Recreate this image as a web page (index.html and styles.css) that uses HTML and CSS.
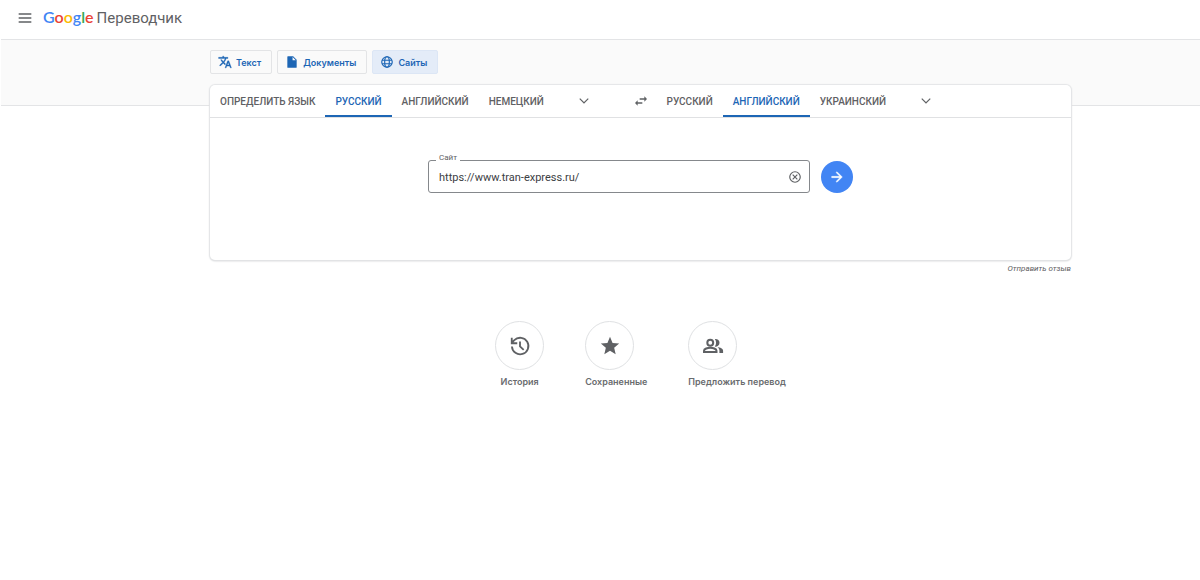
FILE: index.html
```html
<!DOCTYPE html>
<html lang="ru">
<head>
<meta charset="utf-8">
<meta name="viewport" content="width=device-width, initial-scale=1">
<title>Google Переводчик</title>
<link rel="stylesheet" href="styles.css">
</head>
<body>
<header class="header">
  <button class="icon-button" type="button" aria-label="Главное меню">
    <svg width="16" height="16" viewBox="0 0 24 24"><path d="M2.500 19h19v-2.200h-19zM2.500 13.100h19v-2.200h-19zM2.500 5v2.200h19V5z"/></svg>
  </button>
  <a class="brand" href="#">
    <span class="logo"><span class="blue">G</span><span class="red">o</span><span class="yellow">o</span><span class="blue">g</span><span class="green">l</span><span class="red">e</span></span>
    <span class="product">Переводчик</span>
  </a>
</header>
<main class="main">
  <div class="band">
    <nav class="modes">
      <button class="mode" type="button">
        <svg width="14" height="14" viewBox="0 0 24 24"><path stroke="currentColor" stroke-width=".6" d="M12.870 15.070l-2.540-2.510.03-.03A17.520 17.520 0 0 0 14.070 6H17V4h-7V2H8v2H1v1.990h11.170C11.500 7.920 10.440 9.750 9 11.350 8.070 10.320 7.300 9.190 6.690 8h-2c.73 1.630 1.730 3.170 2.980 4.560l-5.090 5.020L4 19l5-5 3.110 3.110.76-2.040zM18.500 10h-2L12 22h2l1.120-3h4.750L21 22h2l-4.500-12zm-2.620 7l1.620-4.330L19.120 17h-3.240z"/></svg>
        Текст
      </button>
      <button class="mode" type="button">
        <svg width="14" height="14" viewBox="0 0 24 24"><path d="M5 2h9l6 6v13a1 1 0 0 1-1 1H5a1 1 0 0 1-1-1V3a1 1 0 0 1 1-1zm8 1.500V9h5.500z"/></svg>
        Документы
      </button>
      <button class="mode mode-active" type="button">
        <svg width="14" height="14" viewBox="0 0 24 24" class="line-icon"><circle cx="12" cy="12" r="9"/><ellipse cx="12" cy="12" rx="4" ry="9"/><path d="M3.500 9h17M3.500 15h17"/></svg>
        Сайты
      </button>
    </nav>
  </div>
  <div class="column">
    <section class="card">
      <div class="languages">
        <div class="tabs tabs-source">
          <button class="tab" type="button">Определить язык</button>
          <button class="tab tab-active" type="button">Русский</button>
          <button class="tab" type="button">Английский</button>
          <button class="tab" type="button">Немецкий</button>
          <button class="more" type="button" aria-label="Другие языки"><svg width="14" height="14" viewBox="0 0 24 24"><path d="M5.410 7.090L4 8.500l8 8 8-8-1.410-1.410L12 13.670z"/></svg></button>
        </div>
        <button class="swap" type="button" aria-label="Поменять языки"><svg width="16" height="16" viewBox="0 0 24 24"><path d="M6.990 11L3 15l3.990 4v-3H14v-2H6.990v-3zM21 9l-3.990-4v3H10v2h7.010v3L21 9z"/></svg></button>
        <div class="tabs tabs-target">
          <button class="tab" type="button">Русский</button>
          <button class="tab tab-active" type="button">Английский</button>
          <button class="tab" type="button">Украинский</button>
          <button class="more" type="button" aria-label="Другие языки"><svg width="14" height="14" viewBox="0 0 24 24"><path d="M5.410 7.090L4 8.500l8 8 8-8-1.410-1.410L12 13.670z"/></svg></button>
        </div>
      </div>
      <form class="site-form">
        <div class="field">
          <label class="field-label" for="site">Сайт</label>
          <input class="field-input" id="site" type="text" value="https://www.tran-express.ru/">
          <button class="clear" type="button" aria-label="Очистить"><svg width="14" height="14" viewBox="0 0 24 24" class="line-icon"><circle cx="12" cy="12" r="9"/><path d="M8 8l8 8M16 8l-8 8"/></svg></button>
        </div>
        <button class="go" type="submit" aria-label="Перевести"><svg width="16" height="16" viewBox="0 0 24 24"><path stroke="currentColor" stroke-width=".6" d="M12 4l-1.410 1.410L16.170 11H4v2h12.170l-5.580 5.590L12 20l8-8z"/></svg></button>
      </form>
    </section>
    <a class="feedback" href="#">Отправить отзыв</a>
    <nav class="actions">
      <a class="action" href="#">
        <span class="action-circle"><svg width="22" height="22" viewBox="0 0 24 24" class="line-icon"><path d="M3.200 12.500a9 9 0 1 0 2.600-6.800L3 8.500M3 3v6h6M12 7v5.400l4 3.800"/></svg></span>
        <span class="action-label">История</span>
      </a>
      <a class="action" href="#">
        <span class="action-circle"><svg width="22" height="22" viewBox="0 0 24 24"><path d="M12 17.270L18.180 21l-1.640-7.030L22 9.240l-7.190-.61L12 2 9.190 8.630 2 9.240l5.460 4.730L5.820 21z"/></svg></span>
        <span class="action-label">Сохраненные</span>
      </a>
      <a class="action" href="#">
        <span class="action-circle"><svg width="22" height="22" viewBox="0 0 24 24"><g fill="none" stroke="currentColor" stroke-width="2.200"><circle cx="9" cy="8.500" r="3.200"/><path d="M2.200 18.600v-1.500c0-2 4-3.300 6.800-3.300s6.800 1.300 6.800 3.300v1.500z"/></g><path d="M14 4.400a4.200 4.200 0 1 1 0 8.200c1.800-2.500 1.800-5.700 0-8.200zM17 13.200c2.800.5 6 1.800 6 4v2.500h-4v-2.500c0-1.600-.8-3-2-4z"/></svg></span>
        <span class="action-label">Предложить перевод</span>
      </a>
    </nav>
  </div>
</main>
</body>
</html>
```
FILE: styles.css
```css
* {
  box-sizing: border-box;
}

body {
  margin: 0;
  background: #fff;
  color: #5f6164;
  font-family: Roboto, "Liberation Sans", sans-serif;
}

button {
  margin: 0;
  padding: 0;
  border: 0;
  background: none;
  color: inherit;
  font-family: inherit;
  cursor: pointer;
}

a {
  color: inherit;
  text-decoration: none;
}

svg {
  display: block;
  flex: none;
  fill: currentColor;
}

.line-icon {
  fill: none;
  stroke: currentColor;
  stroke-width: 2;
}

.header {
  display: flex;
  align-items: center;
  gap: 10px;
  height: 39px;
  padding: 0 17px 4px;
}

.brand {
  display: flex;
  align-items: baseline;
  gap: 3px;
}

.logo {
  font-family: Lato, sans-serif;
  font-size: 16px;
  font-weight: 600;
  line-height: 20px;
}

.product {
  font-size: 15px;
  line-height: 20px;
}

.blue { color: #4285f4; }
.red { color: #ea4335; }
.yellow { color: #fbbc05; }
.green { color: #34a853; }

.band {
  height: 67px;
  margin-left: 1px;
  padding: 10px 129px 0 209px;
  border: 1px solid #e3e4e6;
  border-width: 1px 0;
  background: #fafafa;
}

.modes {
  display: flex;
  gap: 5px;
}

.mode {
  display: flex;
  align-items: center;
  gap: 4px;
  height: 24px;
  padding: 0 10px 0 7px;
  border: 1px solid #e3e4e6;
  border-radius: 2px;
  color: #1d66b5;
  font-family: Inter, sans-serif;
  font-size: 9px;
  font-weight: 600;
}

.mode-active {
  border-color: #dce6f5;
  background: #e4ecf8;
}

.column {
  display: flex;
  flex-direction: column;
  margin-top: -21px;
  padding: 0 129px 0 210px;
}

.card {
  min-height: 175px;
  border-radius: 5px;
  background: #fff;
  box-shadow: 0 0 1px 1px #e4e5e7, 0 1px 2px #c4c6c9;
}

.languages {
  display: grid;
  grid-template-columns: 1fr 32px 1fr;
  height: 33px;
  border-bottom: 1px solid #e0e1e3;
}

.tabs {
  display: flex;
}

.tab {
  padding: 0 10px;
  border-bottom: 2px solid transparent;
  border-top: 2px solid transparent;
  font-size: 10px;
  font-weight: 500;
  text-transform: uppercase;
  white-space: nowrap;
}

.tab-active {
  border-bottom-color: #1d66b5;
  color: #1d66b5;
}

.more,
.swap {
  display: grid;
  place-items: center;
  width: 32px;
}

.more {
  margin-left: 14px;
}

.site-form {
  display: flex;
  align-items: center;
  justify-content: center;
  gap: 11px;
  padding: 42px 16px;
}

.field {
  position: relative;
  display: flex;
  align-items: center;
  width: 382px;
  height: 33px;
  padding: 0 7px 0 10px;
  border: 1px solid #85888c;
  border-radius: 3px;
}

.field-label {
  position: absolute;
  top: -8px;
  left: 7px;
  padding: 0 3px;
  background: #fff;
  font-size: 8px;
  line-height: 10px;
}

.field-input {
  flex: 1;
  min-width: 0;
  padding: 1px 0 0;
  border: 0;
  outline: 0;
  background: none;
  color: #3c4043;
  font-family: inherit;
  font-size: 11px;
}

.go {
  display: grid;
  place-items: center;
  width: 32px;
  height: 32px;
  border-radius: 50%;
  background: #4285f4;
  color: #fff;
}

.feedback {
  align-self: flex-end;
  margin-top: 4px;
  font-size: 8px;
  font-style: italic;
  line-height: 10px;
}

.actions {
  display: flex;
  justify-content: center;
  gap: 41px;
  margin-top: 47px;
}

.action {
  display: flex;
  flex-direction: column;
  gap: 6px;
}

.action-circle {
  display: grid;
  place-items: center;
  width: 49px;
  height: 49px;
  border: 1px solid #dfe1e3;
  border-radius: 50%;
}

.action-label {
  color: #6a6c6f;
  font-family: Inter, sans-serif;
  font-size: 9px;
  font-weight: 600;
  line-height: 12px;
  text-align: center;
}
```
